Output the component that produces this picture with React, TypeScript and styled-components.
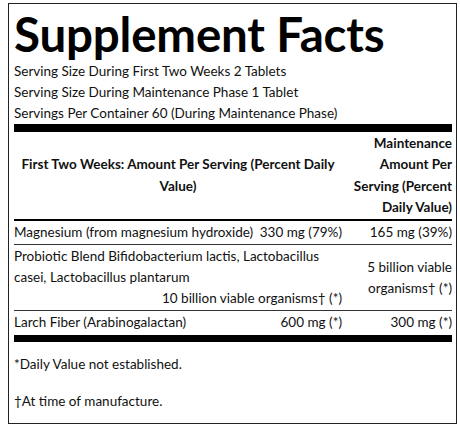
import styled, { createGlobalStyle } from "styled-components";

const GlobalStyle = createGlobalStyle`
  body {
    margin: 3px 0 0 8px;
    background: #fff;
    font-family: Lato, "Open Sans", sans-serif;
    color: #111;
  }
`;

const rows = [
  {
    name: "Magnesium (from magnesium hydroxide)",
    first: "330 mg (79%)",
    maint: "165 mg (39%)",
  },
  {
    name: "Probiotic Blend Bifidobacterium lactis, Lactobacillus casei, Lactobacillus plantarum",
    first: "10 billion viable organisms† (*)",
    maint: "5 billion viable organisms† (*)",
  },
  {
    name: "Larch Fiber (Arabinogalactan)",
    first: "600 mg (*)",
    maint: "300 mg (*)",
  },
];

export default function App() {
  return (
    <>
      <GlobalStyle />
      <Label>
        <Title>Supplement Facts</Title>
        <ServingLine>Serving Size During First Two Weeks 2 Tablets</ServingLine>
        <ServingLine>Serving Size During Maintenance Phase 1 Tablet</ServingLine>
        <ServingLine>Servings Per Container 60 (During Maintenance Phase)</ServingLine>
        <Bar $height={8} />
        <FactsGrid>
          <HeadCell $center>
            First Two Weeks: Amount Per Serving (Percent Daily Value)
          </HeadCell>
          <HeadCell>Maintenance Amount Per Serving (Percent Daily Value)</HeadCell>
          {rows.map((r, i) => (
            <Row key={r.name} $last={i === rows.length - 1}>
              <NameCell>
                <Name>{r.name}</Name>
                <Amount>{r.first}</Amount>
              </NameCell>
              <MaintCell>{r.maint}</MaintCell>
            </Row>
          ))}
        </FactsGrid>
        <Bar $height={7} />
        <Note>*Daily Value not established.</Note>
        <Note>†At time of manufacture.</Note>
      </Label>
    </>
  );
}

const Label = styled.div`
  box-sizing: border-box;
  width: 449px;
  height: 421px;
  border: 1px solid #222;
  padding: 0 4px 0 5px;
  display: flex;
  flex-direction: column;
  overflow: hidden;
`;

const Title = styled.h1`
  margin: 6px 0 3px;
  font-size: 47.5px;
  line-height: 48px;
  font-weight: 700;
  color: #000;
  letter-spacing: -0.2px;
`;

const ServingLine = styled.div`
  font-size: 13.5px;
  line-height: 21px;
`;

const Bar = styled.div<{ $height: number }>`
  flex: none;
  height: ${(p) => p.$height}px;
  background: #000;
`;

const FactsGrid = styled.div`
  display: grid;
  grid-template-columns: 328px 1fr;
  font-size: 13.5px;
  line-height: 21.3px;
`;

const HeadCell = styled.div<{ $center?: boolean }>`
  font-weight: 700;
  padding: 1px 0 1px;
  display: flex;
  align-items: center;
  justify-content: ${(p) => (p.$center ? "center" : "flex-end")};
  text-align: ${(p) => (p.$center ? "center" : "right")};
  padding-left: ${(p) => (p.$center ? "0" : "8px")};
  border-bottom: 2px solid #000;
`;

const Row = styled.div<{ $last?: boolean }>`
  display: contents;
  & > div {
    border-bottom: ${(p) => (p.$last ? "none" : "1px solid #333")};
    padding: 1px 0 1px;
  }
`;

const NameCell = styled.div`
  display: flex;
  flex-wrap: wrap;
  align-items: flex-start;
  column-gap: 6px;
  line-height: 21px;
`;

const Name = styled.span`
  flex: 0 1 auto;
`;

const Amount = styled.span`
  margin-left: auto;
`;

const MaintCell = styled.div`
  display: flex;
  align-items: center;
  justify-content: flex-end;
  text-align: right;
  padding-left: 8px !important;
`;

const Note = styled.div`
  font-size: 13.5px;
  line-height: 21px;
  margin-top: 12px;
  & + & {
    margin-top: 16px;
  }
`;
